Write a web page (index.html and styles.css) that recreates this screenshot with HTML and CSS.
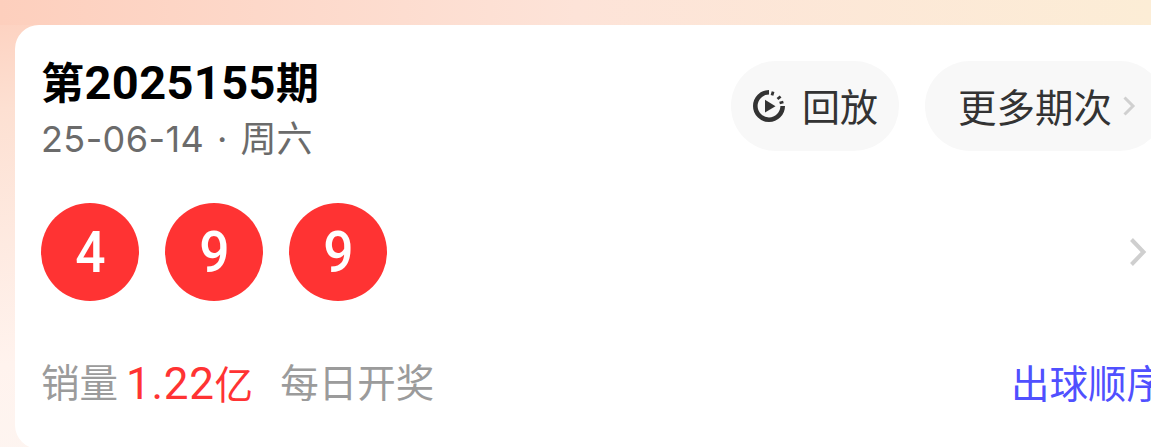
FILE: index.html
```html
<!DOCTYPE html>
<html lang="zh-CN">
<head>
    <meta charset="UTF-8">
    <meta name="viewport" content="width=device-width, initial-scale=1.0">
    <title>第2025155期</title>
    <link rel="stylesheet" href="styles.css">
</head>
<body>
    <div class="card">
        <div class="top">
            <div class="issue">
                <div class="issue-no"><span class="cjk">第</span>2025155<span class="cjk">期</span></div>
                <div class="issue-date"><span class="date">25-06-14</span><span class="dot">·</span><span class="week">周六</span></div>
            </div>
            <div class="actions">
                <div class="pill pill-replay">
                    <svg class="replay-icon" viewBox="0 0 34 34" width="34" height="34">
                        <path d="M17 3.300A13.700 13.700 0 1 0 30.700 17" fill="none" stroke="#333" stroke-width="4.600"/>
                        <path d="M21.100 2.600L20 6.400M28.600 7.500L25.500 10M31.400 13L27.600 14" fill="none" stroke="#333" stroke-width="2.800"/>
                        <path d="M13 10.800l10.500 6.400L13 23.600z" fill="#333"/>
                    </svg>
                    <span class="pill-text">回放</span>
                </div>
                <div class="pill pill-more">
                    <span class="pill-text">更多期次</span>
                    <svg class="arrow-small" viewBox="0 0 14 22" width="14" height="22">
                        <path d="M2.500 2.500L11 11l-8.500 8.500" fill="none" stroke="#d0d0d0" stroke-width="3"/>
                    </svg>
                </div>
            </div>
        </div>
        <div class="balls-row">
            <div class="balls">
                <div class="ball"><span>4</span></div>
                <div class="ball"><span>9</span></div>
                <div class="ball"><span>9</span></div>
            </div>
            <svg class="arrow" viewBox="0 0 18 30" width="18" height="30">
                <path d="M2.500 2.500L14.500 15 2.500 27.500" fill="none" stroke="#cfcfcf" stroke-width="4"/>
            </svg>
        </div>
        <div class="bottom">
            <div class="sales">
                <span>销量</span>
                <span class="amount"><span class="num">1.22</span>亿</span>
                <span class="daily">每日开奖</span>
            </div>
            <div class="order">出球顺序</div>
        </div>
    </div>
</body>
</html>
```

FILE: styles.css
```css
html{
    height: 100%;
    overflow: hidden;
}
body{
    margin: 0;
    width: 1151px;
    height: 447px;
    overflow: hidden;
    font-family: "Roboto", "Noto Sans CJK SC", sans-serif;
    background: linear-gradient(172deg, #fdcfbd 0%, #fde0d2 18%, #fff3ee 60%, #fbf7f4 100%);
    position: relative;
}
body::before{
    content: "";
    position: absolute;
    left: 0;
    top: 0;
    width: 100%;
    height: 25px;
    background: linear-gradient(90deg, #fdcfbd 0%, #fde3d8 50%, #fcedd6 100%);
}
.card{
    position: relative;
    box-sizing: border-box;
    width: 1200px;
    height: 424px;
    margin: 25px 0 0 15px;
    padding: 33px 50px 0 26px;
    background: #fff;
    border-radius: 24px;
}
.top{
    display: flex;
    justify-content: space-between;
    align-items: flex-start;
}
.issue-no{
    height: 50px;
    font-size: 47px;
    line-height: 50px;
    font-weight: 700;
    letter-spacing: .4px;
    color: #000;
}
.cjk{
    font-size: 43px;
}
.issue-date{
    display: flex;
    margin-top: 10px;
    font-family: "Inter", "Noto Sans CJK SC", sans-serif;
    font-size: 36px;
    line-height: 42px;
    color: #6b6b6b;
}
.date{
    letter-spacing: .4px;
}
.dot{
    margin: 0 13px;
}
.actions{
    display: flex;
    gap: 26px;
    margin-top: 3px;
}
.pill{
    display: flex;
    align-items: center;
    box-sizing: border-box;
    height: 90px;
    border-radius: 45px;
    background: #f8f8f8;
    font-size: 38px;
    color: #333;
}
.pill-text{
    padding-bottom: 3px;
}
.pill-replay{
    width: 168px;
    padding-left: 21px;
    gap: 16px;
}
.pill-more{
    width: 240px;
    padding-left: 33px;
    gap: 10px;
    font-size: 38.500px;
}
.balls-row{
    display: flex;
    justify-content: space-between;
    align-items: center;
    margin-top: 43px;
    padding-right: 18px;
}
.balls{
    display: flex;
    gap: 26px;
}
.ball{
    width: 98px;
    height: 98px;
    border-radius: 50%;
    background: #ff3333;
    color: #fff;
    font-size: 58px;
    font-weight: 500;
    line-height: 98px;
    text-align: center;
}
.ball span{
    display: inline-block;
    transform: scaleX(.92);
}
.bottom{
    display: flex;
    justify-content: space-between;
    align-items: center;
    margin-top: 55px;
    font-size: 38.500px;
    line-height: 56px;
}
.sales{
    display: flex;
    color: #9b9b9b;
}
.amount{
    margin: 0 27px 0 8px;
    color: #ff3333;
}
.num{
    font-size: 44px;
    letter-spacing: .7px;
}
.order{
    color: #5050ff;
    white-space: nowrap;
}
```
